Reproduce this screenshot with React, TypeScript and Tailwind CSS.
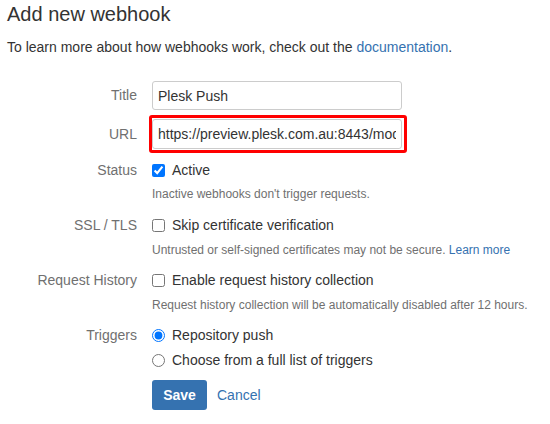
import React from "react";

const LABEL = "w-[137px] shrink-0 text-right text-[14px] text-[#707070]";

function Row({ label, children, className = "" }: { label?: string; children: React.ReactNode; className?: string }) {
  return (
    <div className={`flex items-center ${className}`}>
      <div className={LABEL}>{label}</div>
      <div className="ml-[15px] flex items-center">{children}</div>
    </div>
  );
}

function Help({ children, className = "" }: { children: React.ReactNode; className?: string }) {
  return (
    <div className={`ml-[152px] text-[12px] leading-[16px] text-[#707070] ${className}`}>{children}</div>
  );
}

export default function App() {
  return (
    <div
      className="min-h-screen bg-white px-[7px] text-[#333]"
      style={{ fontFamily: '"Liberation Sans", Arial, sans-serif' }}
    >
      <h2 className="pt-[2px] text-[20px] leading-[24px] font-normal text-[#333]">Add new webhook</h2>
      <p className="mt-[11px] text-[14px] leading-[20px]">
        To learn more about how webhooks work, check out the{" "}
        <a href="#" className="text-[#3572b0]">documentation</a>.
      </p>

      <form className="-ml-[7px]" onSubmit={(e) => e.preventDefault()}>
        <Row label="Title" className="mt-[24px]">
          <input
            defaultValue="Plesk Push"
            className="h-[29px] w-[250px] rounded-[3px] border border-[#ccc] px-[5px] text-[14px] text-[#333] outline-none"
          />
        </Row>

        <div className="mt-[5px] flex items-center">
          <div className={LABEL}>URL</div>
          <div className="ml-[12px] rounded-[3px] border-[3px] border-[#ff0000] py-px pr-[2px]">
            <input
              defaultValue="https://preview.plesk.com.au:8443/modules/git/public/web-hook.php"
              className="block h-[30px] w-[250px] rounded-[3px] border border-[#ccc] px-[5px] text-[14px] text-[#333] outline-none"
            />
          </div>
        </div>

        <Row label="Status" className="mt-[7px] h-[20px]">
          <label className="flex items-center text-[14px] text-[#333]">
            <input type="checkbox" defaultChecked className="m-0 h-[13px] w-[13px]" />
            <span className="ml-[7px]">Active</span>
          </label>
        </Row>
        <Help className="mt-[6px]">Inactive webhooks don't trigger requests.</Help>

        <Row label="SSL / TLS" className="mt-[13px] h-[20px]">
          <label className="flex items-center text-[14px] text-[#333]">
            <input type="checkbox" className="m-0 h-[13px] w-[13px]" />
            <span className="ml-[7px]">Skip certificate verification</span>
          </label>
        </Row>
        <Help className="mt-[7px]">
          Untrusted or self-signed certificates may not be secure.{" "}
          <a href="#" className="text-[#3572b0]">Learn more</a>
        </Help>

        <Row label="Request History" className="mt-[12px] h-[20px]">
          <label className="flex items-center text-[14px] text-[#333]">
            <input type="checkbox" className="m-0 h-[13px] w-[13px]" />
            <span className="ml-[7px]">Enable request history collection</span>
          </label>
        </Row>
        <Help className="mt-[7px]">Request history collection will be automatically disabled after 12 hours.</Help>

        <Row label="Triggers" className="mt-[12px] h-[20px]">
          <label className="flex items-center text-[14px] text-[#333]">
            <input type="radio" name="triggers" defaultChecked className="m-0 h-[13px] w-[13px]" />
            <span className="ml-[7px]">Repository push</span>
          </label>
        </Row>
        <Row className="mt-[5px] h-[20px]">
          <label className="flex items-center text-[14px] text-[#333]">
            <input type="radio" name="triggers" className="m-0 h-[13px] w-[13px]" />
            <span className="ml-[7px]">Choose from a full list of triggers</span>
          </label>
        </Row>

        <div className="mt-[10px] ml-[152px] flex items-center">
          <button
            type="submit"
            className="h-[30px] w-[55px] rounded-[3px] bg-[#3572b0] text-[14px] font-bold text-white"
          >
            Save
          </button>
          <a href="#" className="ml-[10px] text-[14px] text-[#3572b0]">Cancel</a>
        </div>
      </form>
    </div>
  );
}
